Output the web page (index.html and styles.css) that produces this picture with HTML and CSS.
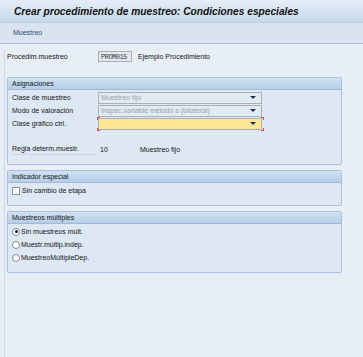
FILE: index.html
```html
<!DOCTYPE html>
<html lang="es">
<head>
    <meta charset="UTF-8">
    <title>Crear procedimiento de muestreo</title>
    <link rel="stylesheet" href="styles.css">
</head>
<body>
    <div class="titlebar">Crear procedimiento de muestreo: Condiciones especiales</div>
    <div class="toolbar"><span class="menu">Muestreo</span></div>

    <div class="content">
        <!-- header field -->
        <div class="toprow">
            <span class="label">Procedim.muestreo</span>
            <span class="keyfield">PROM015</span>
            <span class="desc">Ejemplo Procedimiento</span>
        </div>

        <!-- Asignaciones -->
        <div class="group">
            <div class="group-head">Asignaciones</div>
            <div class="group-body">
                <div class="row">
                    <span class="label">Clase de muestreo</span>
                    <span class="select disabled">Muestreo fijo<i class="arrow"></i></span>
                </div>
                <div class="row">
                    <span class="label">Modo de valoración</span>
                    <span class="select disabled">Inspec.variable método s (bilateral)<i class="arrow"></i></span>
                </div>
                <div class="row">
                    <span class="label">Clase gráfico ctrl.</span>
                    <span class="select required"><i class="arrow"></i><i class="mark-top"></i><i class="mark-bottom"></i></span>
                </div>
                <div class="row"></div>
                <div class="row">
                    <span class="label underline">Regla determ.muestr.</span>
                    <span class="value">10</span>
                    <span class="value-desc">Muestreo fijo</span>
                </div>
            </div>
        </div>

        <!-- Indicador especial -->
        <div class="group">
            <div class="group-head">Indicador especial</div>
            <div class="group-body">
                <div class="row">
                    <span class="check"></span>
                    <span class="opt">Sin cambio de etapa</span>
                </div>
            </div>
        </div>

        <!-- Muestreos multiples -->
        <div class="group">
            <div class="group-head">Muestreos múltiples</div>
            <div class="group-body">
                <div class="row">
                    <span class="radio on"></span>
                    <span class="opt">Sin muestreos múlt.</span>
                </div>
                <div class="row">
                    <span class="radio"></span>
                    <span class="opt">Muestr.múltip.indep.</span>
                </div>
                <div class="row">
                    <span class="radio"></span>
                    <span class="opt">MuestreoMúltipleDep.</span>
                </div>
            </div>
        </div>
    </div>
</body>
</html>
```

FILE: styles.css
```css
body {
    margin: 0;
    font-family: "Liberation Sans", Arial, sans-serif;
    font-size: 7px;
    color: #141414;
    background-color: #e8eef6;
    height: 357px;
    overflow: hidden;
}
.titlebar {
    height: 23px;
    line-height: 24px;
    padding-left: 14px;
    font-size: 10.2px;
    font-weight: bold;
    font-style: italic;
    color: #111;
    background: linear-gradient(#e4edf7, #c6d9ec);
    border-bottom: 1px solid #b9cde3;
    box-sizing: border-box;
}
.toolbar {
    height: 20px;
    line-height: 20px;
    padding-left: 13px;
    background-color: #d9e4f0;
    border-bottom: 1px solid #aebfd3;
}
.menu {
    color: #2d4a7a;
}
.content {
    margin-left: 4px;
    border-left: 1px solid #cfd9e5;
    padding: 0 21px 0 2px;
    height: 313px;
}
.toprow {
    display: flex;
    align-items: center;
    height: 13px;
    margin-top: 6px;
    margin-bottom: 14px;
}
.toprow .label {
    width: 91px;
}
.keyfield {
    width: 34px;
    height: 11px;
    line-height: 11px;
    box-sizing: border-box;
    border: 1px solid #a8adb4;
    background-color: #e3e9f1;
    color: #3c3c3c;
    font-family: "Liberation Mono", monospace;
    font-size: 7px;
    padding-left: 2px;
    letter-spacing: -0.5px;
}
.desc {
    margin-left: 6px;
}
.group {
    border: 1px solid #a9c1dd;
    border-radius: 2px;
    background-color: #dde8f4;
    margin-bottom: 5px;
}
.group-head {
    height: 11px;
    line-height: 11px;
    padding-left: 4px;
    background: linear-gradient(#d0e1f2, #b6cee7);
    border-bottom: 1px solid #9fb9d7;
}
.group-body {
    padding: 1px 0 8px 4px;
}
.row {
    display: flex;
    align-items: center;
    height: 13px;
}
.row .label {
    width: 86px;
}
.underline {
    border-bottom: 1px solid #c9d5e3;
    line-height: 10px;
}
.select {
    position: relative;
    width: 164px;
    height: 12px;
    line-height: 10px;
    box-sizing: border-box;
    border: 1px solid #abb0b7;
    padding-left: 2px;
}
.disabled {
    background-color: #e2eaf3;
    color: #9a9fa6;
}
.required {
    background-color: #fde796;
}
/* red corner marks of a required field */
.mark-top,
.mark-bottom {
    position: absolute;
    left: -2px;
    right: -3px;
    height: 3px;
}
.mark-top {
    top: -2px;
}
.mark-bottom {
    bottom: -2px;
}
.mark-top::before,
.mark-top::after,
.mark-bottom::before,
.mark-bottom::after {
    content: "";
    position: absolute;
    width: 2px;
    height: 2px;
    border-color: #e0485a;
    border-style: solid;
    border-width: 0;
}
.mark-top::before {
    left: 0;
    top: 0;
    border-top-width: 1px;
    border-left-width: 1px;
}
.mark-top::after {
    right: 0;
    top: 0;
    border-top-width: 1px;
    border-right-width: 1px;
}
.mark-bottom::before {
    left: 0;
    bottom: 0;
    border-bottom-width: 1px;
    border-left-width: 1px;
}
.mark-bottom::after {
    right: 0;
    bottom: 0;
    border-bottom-width: 1px;
    border-right-width: 1px;
}
.arrow {
    position: absolute;
    right: 5px;
    top: 3px;
    border-left: 3px solid transparent;
    border-right: 3px solid transparent;
    border-top: 3px solid #1d2f52;
}
.value {
    width: 40px;
    padding-left: 2px;
}
.check {
    width: 6px;
    height: 6px;
    border: 1px solid #8d949c;
    background-color: #fff;
    margin-right: 2px;
}
.radio {
    width: 6px;
    height: 6px;
    border: 1px solid #858c95;
    border-radius: 50%;
    background-color: #fff;
    margin-right: 1px;
    position: relative;
}
.radio.on::after {
    content: "";
    position: absolute;
    left: 1.5px;
    top: 1.5px;
    width: 3px;
    height: 3px;
    border-radius: 50%;
    background-color: #222;
}
```
